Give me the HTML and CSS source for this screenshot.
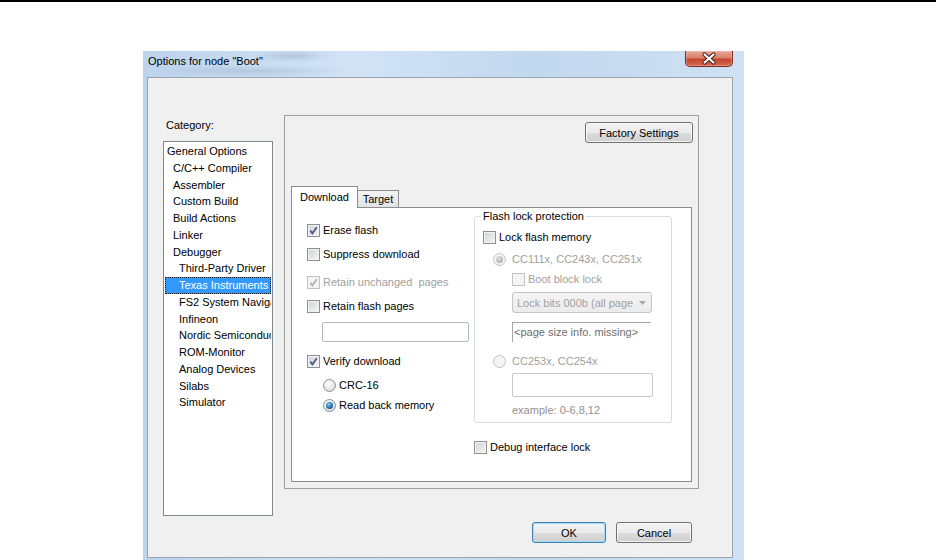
FILE: index.html
```html
<!DOCTYPE html>
<html lang="en">
<head>
    <meta charset="UTF-8">
    <title>Options for node "Boot"</title>
    <link rel="stylesheet" href="styles.css">
</head>
<body>
    <div class="top-rule"></div>

    <div class="window">
        <div class="title-bar">
            <span class="title">Options for node "Boot"</span>
            <div class="close-button">
                <svg width="46" height="15" viewBox="0 0 46 15">
                    <path d="M18.5 3.5 L27.5 11.5 M27.5 3.5 L18.5 11.5" stroke="#4a1a14" stroke-width="4.2" stroke-linecap="round" fill="none"/>
                    <path d="M18.5 3.5 L27.5 11.5 M27.5 3.5 L18.5 11.5" stroke="#fff" stroke-width="2.2" stroke-linecap="round" fill="none"/>
                </svg>
            </div>
        </div>

        <div class="client">
            <div class="main">
                <div class="category">
                    <div class="category-label">Category:</div>
                    <div class="category-list">
                        <div class="item">General Options</div>
                        <div class="item level1">C/C++ Compiler</div>
                        <div class="item level1">Assembler</div>
                        <div class="item level1">Custom Build</div>
                        <div class="item level1">Build Actions</div>
                        <div class="item level1">Linker</div>
                        <div class="item level1">Debugger</div>
                        <div class="item level2">Third-Party Driver</div>
                        <div class="item level2 selected">Texas Instruments</div>
                        <div class="item level2">FS2 System Navigator</div>
                        <div class="item level2">Infineon</div>
                        <div class="item level2">Nordic Semiconductor</div>
                        <div class="item level2">ROM-Monitor</div>
                        <div class="item level2">Analog Devices</div>
                        <div class="item level2">Silabs</div>
                        <div class="item level2">Simulator</div>
                    </div>
                </div>

                <div class="panel">
                    <div class="panel-top">
                        <button class="btn btn-factory">Factory Settings</button>
                    </div>

                    <div class="tabs">
                        <div class="tab tab-active">Download</div>
                        <div class="tab tab-inactive">Target</div>
                    </div>

                    <div class="tab-page">
                        <div class="col-left">
                            <div class="row">
                                <span class="cb"><svg width="11" height="11" viewBox="0 0 11 11"><path d="M2.3 5.6 L4.4 8.3 L8.8 2.2" stroke="#4c5f8e" stroke-width="1.9" fill="none"/></svg></span>
                                <span class="text">Erase flash</span>
                            </div>
                            <div class="row gap-8">
                                <span class="cb"></span>
                                <span class="text">Suppress download</span>
                            </div>
                            <div class="row gap-12 disabled">
                                <span class="cb"><svg width="11" height="11" viewBox="0 0 11 11"><path d="M2.3 5.6 L4.4 8.3 L8.8 2.2" stroke="#b4b4b4" stroke-width="1.9" fill="none"/></svg></span>
                                <span class="text">Retain unchanged&nbsp; pages</span>
                            </div>
                            <div class="row gap-8">
                                <span class="cb"></span>
                                <span class="text">Retain flash pages</span>
                            </div>
                            <div class="textbox textbox-pages"></div>
                            <div class="row gap-11">
                                <span class="cb"><svg width="11" height="11" viewBox="0 0 11 11"><path d="M2.3 5.6 L4.4 8.3 L8.8 2.2" stroke="#4c5f8e" stroke-width="1.9" fill="none"/></svg></span>
                                <span class="text">Verify download</span>
                            </div>
                            <div class="row gap-8 indent">
                                <span class="rb"></span>
                                <span class="text">CRC-16</span>
                            </div>
                            <div class="row gap-4 indent">
                                <span class="rb"><span class="rb-dot"></span></span>
                                <span class="text">Read back memory</span>
                            </div>
                        </div>

                        <div class="col-right">
                            <div class="group">
                                <span class="group-title">Flash lock protection</span>
                                <div class="row gap-5">
                                    <span class="cb"></span>
                                    <span class="text">Lock flash memory</span>
                                </div>
                                <div class="row gap-6 sub disabled">
                                    <span class="rb"><span class="rb-dot"></span></span>
                                    <span class="text wide">CC111x, CC243x, CC251x</span>
                                </div>
                                <div class="row gap-4 subsub disabled">
                                    <span class="cb"></span>
                                    <span class="text">Boot block lock</span>
                                </div>
                                <div class="combo">
                                    <span class="combo-text">Lock bits 000b (all pages)</span>
                                    <svg class="combo-arrow" width="7" height="4" viewBox="0 0 7 4"><path d="M0 0 H7 L3.5 4 Z" fill="#a8a8a8"/></svg>
                                </div>
                                <div class="static-box">&lt;page size info. missing&gt;</div>
                                <div class="row gap-11 sub disabled">
                                    <span class="rb"></span>
                                    <span class="text wide">CC253x, CC254x</span>
                                </div>
                                <div class="textbox textbox-ranges"></div>
                                <div class="hint">example: 0-6,8,12</div>
                            </div>
                            <div class="row gap-16">
                                <span class="cb"></span>
                                <span class="text">Debug interface lock</span>
                            </div>
                        </div>
                    </div>
                </div>
            </div>

            <div class="footer">
                <button class="btn btn-ok">OK</button>
                <button class="btn btn-cancel">Cancel</button>
            </div>
        </div>
    </div>
</body>
</html>
```

FILE: styles.css
```css
body {
    margin: 0;
    background: #fff;
    font-family: "Liberation Sans", Arial, sans-serif;
    font-size: 11px;
    color: #000;
    overflow: hidden;
}

.top-rule {
    height: 2px;
    background: #000;
}

.window {
    width: 601px;
    height: 509px;
    margin: 49px 0 0 143px;
    padding: 0 11px 0 4px;
    box-sizing: border-box;
    background:
        radial-gradient(ellipse 40px 6px at 150px 5px, rgba(90, 110, 140, 0.22), transparent),
        radial-gradient(ellipse 100px 6px at 110px 20px, rgba(90, 110, 140, 0.18), transparent),
        linear-gradient(to right, #bcd3ec 0%, #d2e3f5 35%, #c2d8ef 65%, #cfe1f3 100%);
}

.title-bar {
    height: 26px;
    display: flex;
    align-items: flex-start;
}

.title {
    margin: 3px 0 0 1px;
    line-height: 14px;
    font-size: 11px;
}

.close-button {
    margin-left: auto;
    width: 48px;
    height: 16px;
    box-sizing: border-box;
    border: 1px solid #7d2a20;
    border-top: none;
    border-radius: 0 0 5px 5px;
    background: linear-gradient(#e8a899 0%, #d9806b 45%, #c4452f 55%, #d66a52 100%);
    box-shadow: inset 0 0 0 1px rgba(255, 210, 200, 0.35);
}

.close-button svg {
    display: block;
}

.client {
    height: 481px;
    box-sizing: border-box;
    border: 1px solid #9aa4b0;
    background: #f0f0f0;
}

.main {
    display: flex;
    align-items: flex-start;
    padding: 37px 0 0 15px;
}

.category {
    width: 110px;
}

.category-label {
    margin: 3px 0 8px 3px;
    line-height: 15px;
}

.category-list {
    height: 375px;
    box-sizing: border-box;
    border: 1px solid #828790;
    padding: 1px;
    background: #fff;
    overflow: hidden;
}

.item {
    height: 16.75px;
    line-height: 16.75px;
    padding-left: 2px;
    white-space: nowrap;
    overflow: hidden;
}

.item.level1 {
    padding-left: 8px;
}

.item.level2 {
    padding-left: 14px;
}

.item.selected {
    background: #3399ff;
    color: #fff;
    outline: 1px dotted #1a1a1a;
    outline-offset: -1px;
}

.panel {
    width: 415px;
    height: 374px;
    margin-left: 11px;
    box-sizing: border-box;
    border: 1px solid #a0a0a0;
    padding: 6px;
    display: flex;
    flex-direction: column;
}

.panel-top {
    display: flex;
    justify-content: flex-end;
    margin-right: -1px;
}

.btn {
    font: inherit;
    color: #000;
    height: 21px;
    padding: 0;
    border: 1px solid #707070;
    border-radius: 3px;
    background: linear-gradient(#f2f2f2 0%, #ebebeb 50%, #dddddd 50%, #cfcfcf 100%);
    box-shadow: inset 0 0 0 1px rgba(255, 255, 255, 0.75);
}

.btn-factory {
    width: 108px;
}

.btn-ok {
    width: 74px;
    border-color: #3c7fb1;
    box-shadow: inset 0 0 0 1px #a6dcf6;
}

.btn-cancel {
    width: 76px;
}

.tabs {
    display: flex;
    align-items: flex-end;
    height: 21px;
    margin-top: 43px;
}

.tab {
    box-sizing: border-box;
    border: 1px solid #898c95;
    border-bottom: none;
    text-align: center;
}

.tab-active {
    width: 67px;
    height: 22px;
    line-height: 20px;
    margin-bottom: -1px;
    background: #fff;
    position: relative;
    z-index: 1;
}

.tab-inactive {
    width: 42px;
    height: 17px;
    line-height: 16px;
    margin-left: -1px;
    background: linear-gradient(#f3f3f3, #e3e3e3);
}

.tab-page {
    flex: 1;
    border: 1px solid #898c95;
    background: #fff;
    display: flex;
}

.col-left {
    width: 182px;
    box-sizing: border-box;
    padding: 14px 0 0 15px;
    display: flex;
    flex-direction: column;
}

.col-right {
    width: 198px;
    padding-top: 8px;
    display: flex;
    flex-direction: column;
}

.row {
    display: flex;
    align-items: center;
    height: 16px;
    white-space: nowrap;
}

.row .text {
    margin-left: 3px;
}

.row .text.wide {
    margin-left: 6px;
}

.row.indent {
    margin-left: 16px;
}

.row.sub {
    margin-left: 10px;
}

.row.subsub {
    margin-left: 29px;
}

.row.disabled .text {
    color: #a0a0a0;
}

.gap-4 { margin-top: 4px; }
.gap-5 { margin-top: 5px; }
.gap-6 { margin-top: 6px; }
.gap-8 { margin-top: 8px; }
.gap-11 { margin-top: 11px; }
.gap-12 { margin-top: 12px; }
.gap-16 { margin-top: 16px; }

.cb {
    width: 13px;
    height: 13px;
    flex-shrink: 0;
    box-sizing: border-box;
    border: 1px solid #8e8f8f;
    background: linear-gradient(135deg, #cfd2d6 0%, #f6f6f6 100%);
    box-shadow: inset 0 0 0 1px #f4f4f4;
}

.cb svg {
    display: block;
}

.disabled .cb {
    border-color: #c2c2c2;
    background: #f4f4f4;
    box-shadow: none;
}

.rb {
    width: 13px;
    height: 13px;
    flex-shrink: 0;
    box-sizing: border-box;
    border: 1px solid #8e8f8f;
    border-radius: 50%;
    background: radial-gradient(circle at 40% 35%, #ffffff 0%, #e6e6e6 55%, #cfcfcf 100%);
    display: flex;
    align-items: center;
    justify-content: center;
}

.rb-dot {
    width: 7px;
    height: 7px;
    border-radius: 50%;
    background: radial-gradient(circle at 40% 35%, #8fd3f7 0%, #2a7fc4 45%, #0c3f78 100%);
}

.disabled .rb {
    border-color: #c4c4c4;
    background: #f4f4f4;
}

.disabled .rb-dot {
    background: radial-gradient(circle at 40% 35%, #e4e4e4 0%, #b8b8b8 60%, #9c9c9c 100%);
}

.textbox {
    box-sizing: border-box;
    border: 1px solid #b5b8be;
    border-radius: 2px;
    background: #fff;
}

.textbox-pages {
    width: 147px;
    height: 20px;
    margin: 8px 0 0 15px;
}

.textbox-ranges {
    width: 141px;
    height: 24px;
    margin: 4px 0 0 29px;
    border-color: #c4c6ca;
}

.group {
    width: 198px;
    box-sizing: border-box;
    border: 1px solid #d5dfe5;
    border-radius: 3px;
    padding: 0 0 4px 8px;
    display: flex;
    flex-direction: column;
}

.group-title {
    align-self: flex-start;
    margin: -8px 0 0 -2px;
    padding: 0 2px;
    line-height: 15px;
    background: #fff;
}

.combo {
    width: 140px;
    height: 21px;
    margin: 5px 0 0 29px;
    box-sizing: border-box;
    border: 1px solid #c5c5c5;
    border-radius: 3px;
    background: linear-gradient(#f4f4f4, #ececec);
    display: flex;
    align-items: center;
}

.combo-text {
    width: 116px;
    padding-left: 4px;
    color: #a0a0a0;
    white-space: nowrap;
    overflow: hidden;
}

.combo-arrow {
    margin-left: 6px;
}

.static-box {
    width: 139px;
    height: 20px;
    margin: 9px 0 0 29px;
    box-sizing: border-box;
    border-top: 1px solid #a5a5a5;
    border-left: 1px solid #a5a5a5;
    padding-left: 1px;
    line-height: 18px;
    color: #6e6e6e;
    white-space: nowrap;
}

.hint {
    margin: 5px 0 0 29px;
    line-height: 16px;
    color: #909090;
}

.footer {
    display: flex;
    justify-content: flex-end;
    gap: 10px;
    margin-top: 6px;
    padding-right: 40px;
}
```
